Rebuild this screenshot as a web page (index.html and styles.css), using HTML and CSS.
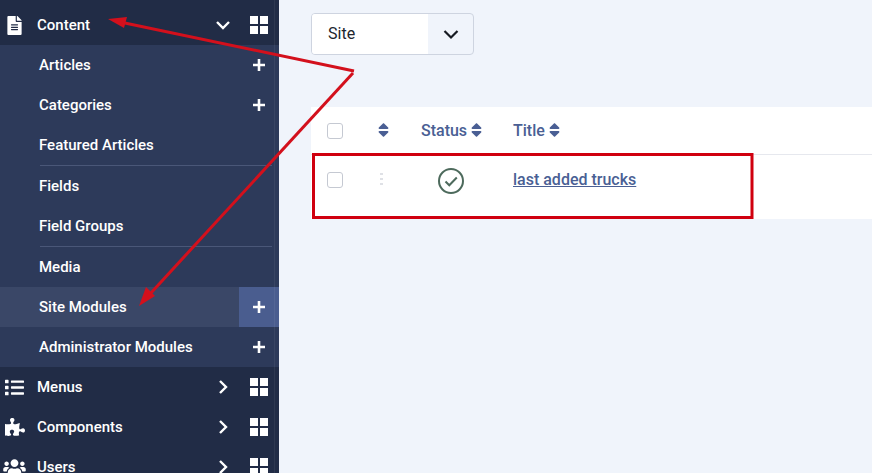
FILE: index.html
```html
<!DOCTYPE html>
<html>
<head>
    <title>Site Modules</title>
    <link rel="stylesheet" href="styles.css">
</head>
<body>
    <div class="wrapper">
        <nav class="sidebar">
            <div class="menu-row">
                <span class="menu-icon"><svg width="15" height="19" viewBox="0 0 384 512"><path d="M224 136V0H24C10.7 0 0 10.7 0 24v464c0 13.3 10.7 24 24 24h336c13.3 0 24-10.7 24-24V160H248c-13.2 0-24-10.8-24-24zm64 236c0 6.6-5.4 12-12 12H108c-6.6 0-12-5.4-12-12v-8c0-6.6 5.4-12 12-12h168c6.6 0 12 5.4 12 12v8zm0-64c0 6.6-5.4 12-12 12H108c-6.6 0-12-5.4-12-12v-8c0-6.6 5.4-12 12-12h168c6.6 0 12 5.4 12 12v8zm0-72v8c0 6.6-5.4 12-12 12H108c-6.6 0-12-5.4-12-12v-8c0-6.6 5.4-12 12-12h168c6.6 0 12 5.4 12 12zm96-114.1v6.1H256V0h6.1c6.4 0 12.5 2.5 17 7l97.9 98c4.5 4.5 7 10.6 7 16.9z"/></svg></span>
                <span class="menu-label">Content</span>
                <span class="menu-arrow"><svg width="16" height="16" viewBox="0 0 16 16"><path class="chevron" d="M2 5l6 6 6-6"/></svg></span>
                <span class="menu-grid"><i></i><i></i><i></i><i></i></span>
            </div>
            <ul class="sub-list">
                <li class="sub-row"><span class="menu-label">Articles</span><span class="sub-add"><svg width="12" height="12" viewBox="0 0 12 12"><path d="M6 0v12M0 6h12"/></svg></span></li>
                <li class="sub-row"><span class="menu-label">Categories</span><span class="sub-add"><svg width="12" height="12" viewBox="0 0 12 12"><path d="M6 0v12M0 6h12"/></svg></span></li>
                <li class="sub-row"><span class="menu-label">Featured Articles</span></li>
                <li class="sub-divider"></li>
                <li class="sub-row"><span class="menu-label">Fields</span></li>
                <li class="sub-row"><span class="menu-label">Field Groups</span></li>
                <li class="sub-divider"></li>
                <li class="sub-row"><span class="menu-label">Media</span></li>
                <li class="sub-row active"><span class="menu-label">Site Modules</span><span class="sub-add"><svg width="12" height="12" viewBox="0 0 12 12"><path d="M6 0v12M0 6h12"/></svg></span></li>
                <li class="sub-row"><span class="menu-label">Administrator Modules</span><span class="sub-add"><svg width="12" height="12" viewBox="0 0 12 12"><path d="M6 0v12M0 6h12"/></svg></span></li>
            </ul>
            <div class="menu-row">
                <span class="menu-icon"><svg width="19" height="19" viewBox="0 0 512 512"><path d="M80 368H16a16 16 0 0 0-16 16v64a16 16 0 0 0 16 16h64a16 16 0 0 0 16-16v-64a16 16 0 0 0-16-16zm0-320H16A16 16 0 0 0 0 64v64a16 16 0 0 0 16 16h64a16 16 0 0 0 16-16V64a16 16 0 0 0-16-16zm0 160H16a16 16 0 0 0-16 16v64a16 16 0 0 0 16 16h64a16 16 0 0 0 16-16v-64a16 16 0 0 0-16-16zm416 176H176a16 16 0 0 0-16 16v32a16 16 0 0 0 16 16h320a16 16 0 0 0 16-16v-32a16 16 0 0 0-16-16zm0-320H176a16 16 0 0 0-16 16v32a16 16 0 0 0 16 16h320a16 16 0 0 0 16-16V80a16 16 0 0 0-16-16zm0 160H176a16 16 0 0 0-16 16v32a16 16 0 0 0 16 16h320a16 16 0 0 0 16-16v-32a16 16 0 0 0-16-16z"/></svg></span>
                <span class="menu-label">Menus</span>
                <span class="menu-arrow"><svg width="16" height="16" viewBox="0 0 16 16"><path class="chevron" d="M5 2l6 6-6 6"/></svg></span>
                <span class="menu-grid"><i></i><i></i><i></i><i></i></span>
            </div>
            <div class="menu-row">
                <span class="menu-icon"><svg width="20" height="18" viewBox="0 0 576 512"><path d="M519.442 288.651c-41.519 0-59.5 31.593-82.058 31.593C377.409 320.244 432 144 432 144s-196.288 80-196.288-3.297c0-35.827 36.288-46.25 36.288-85.985C272 19.216 243.885 0 210.539 0c-34.654 0-66.366 18.891-66.366 56.346 0 41.364 31.711 59.277 31.711 81.75C175.885 207.719 0 166.758 0 166.758v333.237s178.635 41.047 178.635-28.662c0-22.473-40-40.107-40-81.471 0-37.456 29.25-56.346 63.577-56.346 33.673 0 61.788 19.216 61.788 54.717 0 39.735-36.288 50.158-36.288 85.985 0 60.803 129.675 25.73 181.23 25.73 0 0-34.725-120.101 25.827-120.101 35.962 0 46.423 36.152 86.308 36.152C556.712 416 576 387.99 576 354.443c0-34.199-18.962-65.792-56.558-65.792z"/></svg></span>
                <span class="menu-label">Components</span>
                <span class="menu-arrow"><svg width="16" height="16" viewBox="0 0 16 16"><path class="chevron" d="M5 2l6 6-6 6"/></svg></span>
                <span class="menu-grid"><i></i><i></i><i></i><i></i></span>
            </div>
            <div class="menu-row">
                <span class="menu-icon"><svg width="23" height="18" viewBox="0 0 640 512"><path d="M96 224c35.3 0 64-28.7 64-64s-28.7-64-64-64-64 28.7-64 64 28.7 64 64 64zm448 0c35.3 0 64-28.7 64-64s-28.7-64-64-64-64 28.7-64 64 28.7 64 64 64zm32 32h-64c-17.6 0-33.5 7.1-45.1 18.6 40.3 22.1 68.9 62 75.1 109.4h66c17.7 0 32-14.3 32-32v-32c0-35.3-28.7-64-64-64zm-256 0c61.9 0 112-50.1 112-112S381.9 32 320 32 208 82.1 208 144s50.1 112 112 112zm76.8 32h-8.3c-20.8 10-43.9 16-68.5 16s-47.6-6-68.5-16h-8.3C179.6 288 128 339.6 128 403.2V432c0 26.5 21.5 48 48 48h288c26.5 0 48-21.5 48-48v-28.8c0-63.6-51.6-115.2-115.2-115.2zm-223.7-13.4C161.5 263.1 145.6 256 128 256H64c-35.3 0-64 28.7-64 64v32c0 17.7 14.3 32 32 32h65.9c6.3-47.4 34.9-87.3 75.2-109.4z"/></svg></span>
                <span class="menu-label">Users</span>
                <span class="menu-arrow"><svg width="16" height="16" viewBox="0 0 16 16"><path class="chevron" d="M5 2l6 6-6 6"/></svg></span>
                <span class="menu-grid"><i></i><i></i><i></i><i></i></span>
            </div>
        </nav>

        <main class="content">
            <div class="site-select">
                <span class="site-select-value">Site</span>
                <span class="site-select-arrow"><svg width="16" height="16" viewBox="0 0 16 16"><path class="select-chevron" d="M1.500 5L8 11.500 14.500 5"/></svg></span>
            </div>

            <div class="list-table">
                <div class="list-row list-head">
                    <div class="cell-check"><span class="checkbox"></span></div>
                    <div class="cell-order"><svg class="sort-icon" viewBox="0 0 320 512"><path d="M41 288h238c21.4 0 32.1 25.9 17 41L177 448c-9.4 9.4-24.6 9.4-33.9 0L24 329c-15.1-15.1-4.4-41 17-41zm255-105L177 64c-9.4-9.4-24.6-9.4-33.9 0L24 183c-15.1 15.1-4.4 41 17 41h238c21.4 0 32.1-25.9 17-41z"/></svg></div>
                    <div class="cell-status">Status <svg class="sort-icon" viewBox="0 0 320 512"><path d="M41 288h238c21.4 0 32.1 25.9 17 41L177 448c-9.4 9.4-24.6 9.4-33.9 0L24 329c-15.1-15.1-4.4-41 17-41zm255-105L177 64c-9.4-9.4-24.6-9.4-33.9 0L24 183c-15.1 15.1-4.4 41 17 41h238c21.4 0 32.1-25.9 17-41z"/></svg></div>
                    <div class="cell-title">Title <svg class="sort-icon" viewBox="0 0 320 512"><path d="M41 288h238c21.4 0 32.1 25.9 17 41L177 448c-9.4 9.4-24.6 9.4-33.9 0L24 329c-15.1-15.1-4.4-41 17-41zm255-105L177 64c-9.4-9.4-24.6-9.4-33.9 0L24 183c-15.1 15.1-4.4 41 17 41h238c21.4 0 32.1-25.9 17-41z"/></svg></div>
                </div>
                <div class="list-row list-item">
                    <div class="cell-check"><span class="checkbox"></span></div>
                    <div class="cell-order"><span class="drag-handle"><i></i><i></i><i></i></span></div>
                    <div class="cell-status"><svg class="status-icon" width="26" height="26" viewBox="0 0 26 26"><circle cx="13" cy="13" r="12"/><path d="M7.500 13.500l3.800 3.800 7.500-7.800"/></svg></div>
                    <div class="cell-title"><a class="item-link" href="#">last added trucks</a></div>
                </div>
            </div>
        </main>

        <!-- red marks drawn on top of the screenshot -->
        <svg class="annotations" width="872" height="473" viewBox="0 0 872 473">
            <rect x="313.500" y="154.500" width="438.500" height="63" class="mark-box"/>
            <path class="mark-line" d="M354 71L120 22"/>
            <path class="mark-line" d="M353 73L150 294"/>
            <path class="mark-head" d="M108 19L127 17L124 28Z"/>
            <path class="mark-head" d="M139 306L146 287L155 296Z"/>
        </svg>
    </div>
</body>
</html>
```

FILE: styles.css
```css
html, body {
    margin: 0;
    height: 100%;
    overflow: hidden;
}

body {
    background-color: #f0f4fb;
    font-family: Roboto, "Liberation Sans", sans-serif;
    font-size: 15px;
}

.wrapper {
    display: flex;
    height: 473px;
    position: relative;
    overflow: hidden;
}

/* sidebar */
.sidebar {
    width: 279px;
    flex-shrink: 0;
    padding-top: 5px;
    box-sizing: border-box;
    background-color: #212c46;
    color: #ffffff;
    font-weight: 500;
    position: relative;
}

.sidebar::after {
    content: "";
    position: absolute;
    top: 0;
    bottom: 0;
    left: 274px;
    width: 1px;
    background-color: rgba(255, 255, 255, 0.06);
}

.menu-row {
    display: flex;
    align-items: center;
    height: 40px;
}

.menu-icon {
    width: 29px;
    margin-right: 8px;
    display: flex;
    justify-content: center;
}

.menu-icon svg {
    fill: #ffffff;
}

.menu-label {
    flex-grow: 1;
}

.menu-arrow {
    width: 32px;
    display: flex;
    justify-content: center;
}

.chevron {
    fill: none;
    stroke: #ffffff;
    stroke-width: 2.4;
}

.menu-grid {
    width: 18px;
    height: 18px;
    margin: 0 11px;
    display: grid;
    grid-template-columns: 8px 8px;
    grid-template-rows: 8px 8px;
    gap: 2px;
}

.menu-grid i {
    background-color: #ffffff;
}

.sub-list {
    list-style: none;
    margin: 0;
    padding: 0;
    background-color: #2d3a5a;
}

.sub-row {
    display: flex;
    align-items: center;
    height: 40px;
    padding-left: 39px;
}

.sub-row.active {
    background-color: #3a4767;
}

.sub-row.active .sub-add {
    background-color: #4a5d8f;
}

.sub-add {
    width: 40px;
    height: 40px;
    display: flex;
    align-items: center;
    justify-content: center;
}

.sub-add path {
    stroke: #ffffff;
    stroke-width: 2.6;
}

.sub-divider {
    height: 1px;
    margin: 0 7px 0 40px;
    background-color: #4a5778;
}

/* main area */
.content {
    flex-grow: 1;
    padding: 13px 0 0 32px;
}

.site-select {
    display: flex;
    width: 163px;
    height: 42px;
    box-sizing: border-box;
    border: 1px solid #ced4e0;
    border-radius: 4px;
    overflow: hidden;
    color: #22262e;
    font-size: 16px;
}

.site-select-value {
    width: 116px;
    padding-left: 16px;
    box-sizing: border-box;
    line-height: 40px;
    background-color: #ffffff;
}

.site-select-arrow {
    flex-grow: 1;
    display: flex;
    align-items: center;
    justify-content: center;
}

.select-chevron {
    fill: none;
    stroke: #161a22;
    stroke-width: 2.2;
}

.list-table {
    margin-top: 52px;
    background-color: #ffffff;
}

.list-row {
    display: grid;
    grid-template-columns: 56px 40px 94px 1fr;
}

.list-head {
    height: 48px;
    box-sizing: border-box;
    border-bottom: 1px solid #e6e8ee;
    align-items: center;
    color: #4a5f94;
    font-size: 16px;
    font-weight: 500;
}

.list-item {
    height: 64px;
    padding-top: 13px;
    box-sizing: border-box;
}

.cell-check {
    padding-left: 16px;
}

.list-head .cell-order {
    padding-left: 11px;
}

.cell-status {
    padding-left: 14px;
}

.cell-title {
    padding-left: 12px;
}

.list-item .cell-status {
    padding-left: 31px;
}

.checkbox {
    display: block;
    width: 14px;
    height: 14px;
    border: 1px solid #c5c9d2;
    border-radius: 3px;
    background-color: #ffffff;
}

.list-item .checkbox {
    margin-top: 4px;
}

.sort-icon {
    width: 11px;
    height: 18px;
    fill: #4a5f94;
    vertical-align: -3px;
}

.drag-handle {
    display: flex;
    flex-direction: column;
    gap: 3px;
    margin: 5px 0 0 13px;
}

.drag-handle i {
    width: 3px;
    height: 2px;
    background-color: #dfe1e6;
}

.status-icon {
    display: block;
    fill: none;
    stroke: #4d6a5c;
    stroke-width: 2;
}

.item-link {
    color: #4a5f94;
    font-size: 16px;
    font-weight: 500;
    line-height: 24px;
}

/* annotations */
.annotations {
    position: absolute;
    top: 0;
    left: 0;
}

.mark-box {
    fill: none;
    stroke: #d0000f;
    stroke-width: 3;
}

.mark-line {
    fill: none;
    stroke: #d3101c;
    stroke-width: 3;
}

.mark-head {
    fill: #d3101c;
}
```
